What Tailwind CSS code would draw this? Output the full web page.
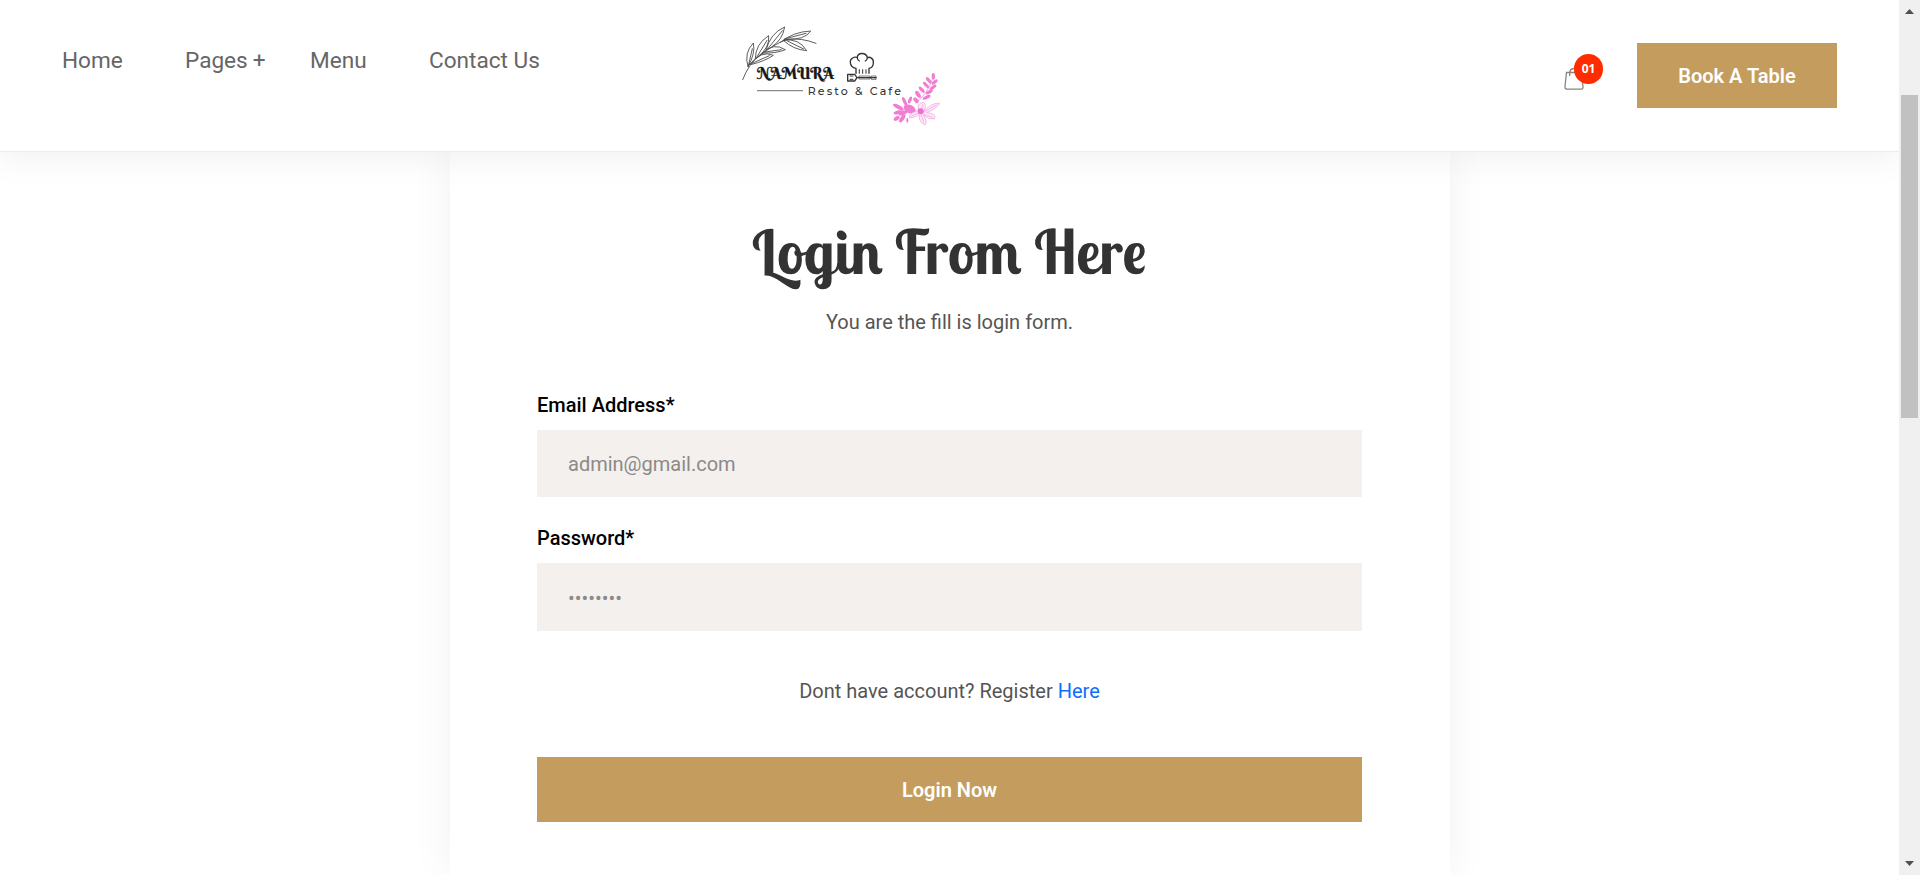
<!DOCTYPE html>
<html lang="en">
<head>
<meta charset="utf-8">
<title>Namura Resto &amp; Cafe - Login</title>
<script src="https://cdn.jsdelivr.net/npm/@tailwindcss/browser@4"></script>
</head>
<body class="flex h-[875px] w-[1920px] overflow-hidden bg-white font-[Roboto,sans-serif]">
<div class="flex h-full w-[1899px] flex-col overflow-hidden">
  <header class="relative z-10 flex h-[152px] shrink-0 items-start border-b border-[#ececec] bg-white shadow-[0_10px_30px_rgba(0,0,0,0.05)]">
    <nav class="flex h-[122px] w-[730px] shrink-0 items-center pl-[62px] text-[22.6px] leading-none text-[#666]">
      <a class="w-[123px]">Home</a><a class="w-[125px]">Pages <span class="-ml-[0.5px]">+</span></a><a class="w-[119px]">Menu</a><a>Contact Us</a>
    </nav>
    <svg class="mt-[10px] h-[130px] w-[220px] shrink-0" viewBox="0 0 660 390" fill="none">
      <g stroke="#444" stroke-width="2.6" stroke-linecap="round" stroke-linejoin="round">
        <path d="M38 209Q58 158 88 138Q130 103 172 88Q215 83 258 100"/>
        <path d="M54 170Q41 129 70 99Q77 130 54 170M55 168L67 116"/>
        <path d="M76 146Q76 102 116 77Q120 113 84 140M80 142L111 91"/>
        <path d="M108 121Q120 70 164 51Q157 91 126 110M112 118L157 62"/>
        <path d="M151 97Q190 65 242 63Q225 91 165 88M163 87L228 70"/>
        <path d="M58 164Q94 119 130 136Q106 153 62 164M66 160L118 137"/>
        <path d="M98 129Q130 96 166 119Q138 131 98 129M106 126L154 119"/>
        <path d="M160 91Q207 83 230 122Q190 119 160 91M172 93L221 117"/>
      </g>
      <text x="82" y="207" textLength="230" lengthAdjust="spacingAndGlyphs" font-family="'Berkshire Swash',Lobster,'Liberation Serif',serif" font-size="46" fill="#171717" stroke="#171717" stroke-width="1">NAMURA</text>
      <g stroke="#333" stroke-width="4" stroke-linejoin="round" stroke-linecap="round">
        <path d="M378 190V175C360 173 357 152 366 146C372 138 382 142 382 144C380 126 410 126 412 144C418 138 432 146 430 158C430 169 422 174 417 175V190M382 144Q383 151 388 153M412 144Q411 151 406 153"/>
        <path d="M388 179V190M398 179V190M408 179V190" stroke-width="3"/>
        <path d="M353 193H374L381 203L374 213H353ZM381 203H438"/>
        <path d="M388 198H420V207H388ZM425 198H438V208H425Z" stroke-width="2"/>
        <path d="M360 198H369M360 208H369" stroke-width="3"/>
      </g>
      <path d="M81 242H219" stroke="#8b8b8b" stroke-width="4"/>
      <text x="233" y="254" textLength="280" lengthAdjust="spacing" font-family="Montserrat,Inter,sans-serif" font-weight="500" font-size="33" fill="#333">Resto &amp; Cafe</text>
      <g fill="#f07fd3">
        <ellipse cx="610" cy="199" rx="5" ry="10"/>
        <ellipse cx="596" cy="211" rx="5" ry="12" transform="rotate(-38 596 211)"/><ellipse cx="614" cy="216" rx="5" ry="11" transform="rotate(50 614 216)"/>
        <ellipse cx="588" cy="225" rx="5" ry="12" transform="rotate(-42 588 225)"/><ellipse cx="609" cy="232" rx="5" ry="12" transform="rotate(55 609 232)"/>
        <ellipse cx="575" cy="239" rx="5" ry="12" transform="rotate(-42 575 239)"/><ellipse cx="598" cy="246" rx="5" ry="12" transform="rotate(60 598 246)"/>
        <ellipse cx="564" cy="253" rx="6" ry="12" transform="rotate(-35 564 253)"/><ellipse cx="590" cy="262" rx="5" ry="13" transform="rotate(65 590 262)"/>
        <ellipse cx="558" cy="271" rx="6" ry="10" transform="rotate(-40 558 271)"/>
        <ellipse cx="524" cy="275" rx="5" ry="15" transform="rotate(-25 524 275)"/><ellipse cx="540" cy="270" rx="5" ry="11" transform="rotate(20 540 270)"/>
        <ellipse cx="505" cy="291" rx="6" ry="18" transform="rotate(-62 505 291)"/><ellipse cx="507" cy="307" rx="6" ry="17" transform="rotate(80 507 307)"/>
        <ellipse cx="500" cy="325" rx="6" ry="10" transform="rotate(55 500 325)"/><ellipse cx="517" cy="325" rx="6" ry="14" transform="rotate(35 517 325)"/>
        <ellipse cx="539" cy="297" rx="19" ry="12" transform="rotate(25 539 297)"/><ellipse cx="532" cy="331" rx="3" ry="8"/>
        <ellipse cx="520" cy="309" rx="14" ry="6" transform="rotate(-25 520 309)"/>
        <ellipse cx="572" cy="299" rx="8" ry="13" transform="rotate(20 572 299)"/>
      </g>
      <path d="M556 280Q594 250 607 207" stroke="#ee76cf" stroke-width="2"/>
      <g stroke="#f29bdc" stroke-width="2" fill="#fdeaf8">
        <path d="M566 302Q560 278 580 277Q592 283 581 304Q611 274 629 281Q617 298 590 308Q621 310 613 327Q596 329 580 315Q593 335 586 344Q566 339 568 314Q545 327 537 322Q540 306 566 302Z"/>
        <path d="M572 309L578 284M577 309L621 284M578 312L608 322M572 312L582 337M566 309L543 319" fill="none"/>
      </g>
      <circle cx="572" cy="304" r="9" fill="#ee70cd"/>
    </svg>
    <div class="relative ml-[614px] mt-[66px] h-6 w-5">
      <svg class="h-6 w-5" viewBox="0 0 20 24" fill="none" stroke="#8d857a" stroke-width="1.3"><path d="M2.500 6.500H17.500L19 20.500Q19.200 23.200 17 23.200H3.200Q.8 23.200 1 20.500ZM5.700 10V7Q6 2.500 10 2.500Q14 2.500 14 7V10"/></svg>
      <span class="absolute -top-3 left-[10px] flex h-[30px] w-[29px] items-center justify-center rounded-full bg-[#ff2c00] font-['Open_Sans',sans-serif] text-[12px] leading-none font-bold text-white">01</span>
    </div>
    <a class="mt-[43px] ml-[53px] flex h-[65px] w-[200px] items-center justify-center bg-[#c49d5e] text-[20px] leading-none font-semibold text-white">Book A Table</a>
  </header>
  <main class="ml-[450px] flex h-[723px] w-[1000px] shrink-0 flex-col pr-[88px] pl-[87px] shadow-[0_0_40px_rgba(0,0,0,0.06)]">
    <h1 class="mt-[64px] h-[70px] origin-center skew-x-[12deg] text-center font-[Lobster,'Liberation_Serif',serif] text-[61px] leading-[70px] font-normal [word-spacing:5px] whitespace-nowrap text-[#333]">Login From Here</h1>
    <p class="mt-[21px] text-center text-[20px] leading-[30px] text-[#555]">You are the fill is login form.</p>
    <form class="flex flex-col">
      <label class="mt-[53px] text-[20px] leading-[30px] font-medium text-black">Email Address*</label>
      <div class="mt-[10px] flex h-[67px] items-center bg-[#f4f0ed] pt-px pl-[31px] text-[20px] leading-[30px] text-[#8a8a8a]">admin@gmail.com</div>
      <label class="mt-[26px] text-[20px] leading-[30px] font-medium text-black">Password*</label>
      <div class="mt-[10px] flex h-[68px] items-center bg-[#f4f0ed] pt-px pl-[31px] text-[20px] leading-[30px] text-[#8a8a8a]">••••••••</div>
      <p class="mt-[45px] text-center text-[20px] leading-[30px] text-[#555]">Dont have account? Register <a class="text-[#0d6efd]">Here</a></p>
      <button type="button" class="mt-[51px] h-[65px] bg-[#c49d5e] text-[20px] leading-none font-semibold text-white">Login Now</button>
    </form>
  </main>
</div>
<aside class="flex w-[21px] flex-col items-center bg-[#f0f0f0]">
  <svg class="mt-[9px] h-[5px] w-[9px]" viewBox="0 0 9 5" fill="#505050"><path d="M0 5L4.500 0L9 5Z"/></svg>
  <div class="mt-[81px] h-[323px] w-[17px] bg-[#c1c1c1]"></div>
  <svg class="mt-auto mb-[9px] h-[5px] w-[9px]" viewBox="0 0 9 5" fill="#505050"><path d="M0 0L4.500 5L9 0Z"/></svg>
</aside>
</body>
</html>
